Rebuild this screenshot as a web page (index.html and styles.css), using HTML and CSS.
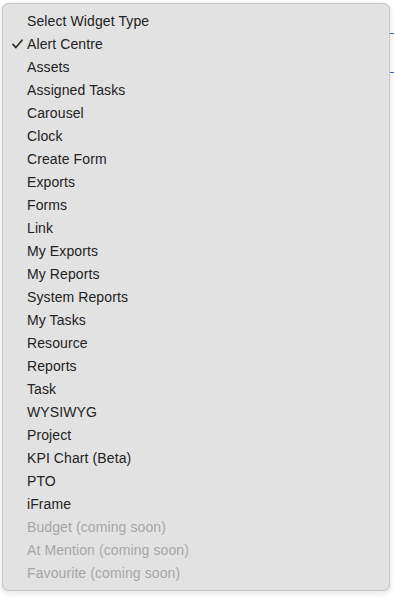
FILE: index.html
```html
<!DOCTYPE html>
<html lang="en">
<head>
  <meta charset="UTF-8">
  <title>Select Widget Type</title>
  <meta name="viewport" content="width=device-width, initial-scale=1.0">
  <link rel="stylesheet" href="styles.css">
</head>
<body>
  <div class="page-lines">
    <div class="line line-top"></div>
    <div class="line line-bottom"></div>
  </div>

  <ul class="menu">
    <li class="menu-item">Select Widget Type</li>
    <li class="menu-item checked">
      <svg class="check" width="11" height="10" viewBox="0 0 11 10">
        <path d="M1 5.4 L3.9 8.6 L10 1.2" fill="none" stroke="#2a2a2a" stroke-width="1.6" stroke-linecap="round" stroke-linejoin="round"/>
      </svg>
      Alert Centre
    </li>
    <li class="menu-item">Assets</li>
    <li class="menu-item">Assigned Tasks</li>
    <li class="menu-item">Carousel</li>
    <li class="menu-item">Clock</li>
    <li class="menu-item">Create Form</li>
    <li class="menu-item">Exports</li>
    <li class="menu-item">Forms</li>
    <li class="menu-item">Link</li>
    <li class="menu-item">My Exports</li>
    <li class="menu-item">My Reports</li>
    <li class="menu-item">System Reports</li>
    <li class="menu-item">My Tasks</li>
    <li class="menu-item">Resource</li>
    <li class="menu-item">Reports</li>
    <li class="menu-item">Task</li>
    <li class="menu-item">WYSIWYG</li>
    <li class="menu-item">Project</li>
    <li class="menu-item">KPI Chart (Beta)</li>
    <li class="menu-item">PTO</li>
    <li class="menu-item">iFrame</li>
    <li class="menu-item disabled">Budget (coming soon)</li>
    <li class="menu-item disabled">At Mention (coming soon)</li>
    <li class="menu-item disabled">Favourite (coming soon)</li>
  </ul>
</body>
</html>
```

FILE: styles.css
```css
body {
  margin: 0;
  padding: 0;
  background: #ffffff;
  font-family: 'Liberation Sans', Arial, sans-serif;
  width: 394px;
  height: 598px;
  overflow: hidden;
  position: relative;
}

.page-lines {
  position: absolute;
  top: 0;
  right: 0;
  width: 10px;
  height: 100px;
}

.line {
  position: absolute;
  right: 0;
  width: 10px;
  height: 1px;
  background: #1b7ab8;
}

.line-top { top: 33px; }
.line-bottom { top: 72px; }

.menu {
  position: absolute;
  top: 3px;
  left: 2px;
  width: 386px;
  margin: 0;
  padding: 6px 0 5px;
  list-style: none;
  background: #e2e2e2;
  border: 1px solid #c6c6c6;
  border-radius: 6px;
  box-shadow: 0 2px 6px rgba(0, 0, 0, 0.12);
}

.menu-item {
  position: relative;
  height: 23px;
  line-height: 23px;
  padding-left: 24px;
  font-size: 14px;
  letter-spacing: 0.1px;
  color: #222222;
}

.check {
  position: absolute;
  left: 9px;
  top: 6px;
}

.menu-item.disabled {
  color: #a6a6a6;
}
```
